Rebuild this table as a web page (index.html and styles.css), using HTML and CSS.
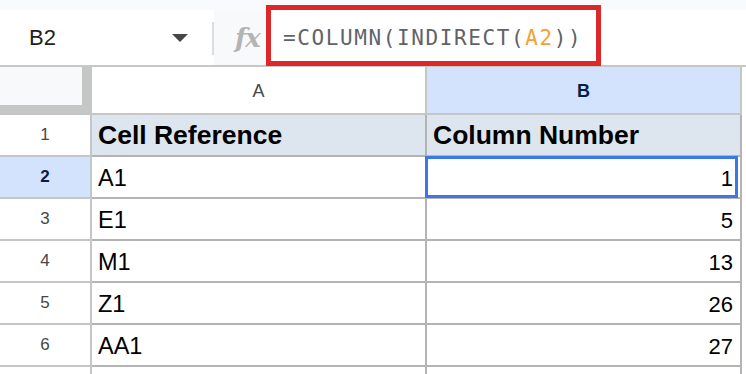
FILE: index.html
```html
<!DOCTYPE html>
<html>
<head>
<meta charset="utf-8">
<link rel="stylesheet" href="styles.css">
</head>
<body>
<div class="app">
  <div class="fbar">
    <div class="namebox">
      <span class="ref">B2</span>
      <span class="caret"></span>
    </div>
    <div class="divider"></div>
    <div class="fx">fx</div>
    <div class="formula">
      <span class="ftext">=COLUMN(INDIRECT(<span class="arg">A2</span>))</span>
      <div class="callout"></div>
    </div>
  </div>
  <div class="grid">
    <div class="corner"><div class="corner-fill"></div></div>
    <div class="colhdr">A</div>
    <div class="colhdr sel">B</div>
    <div class="edge"></div>

    <div class="rowhdr">1</div>
    <div class="cell head">Cell Reference</div>
    <div class="cell head">Column Number</div>
    <div class="edge"></div>

    <div class="rowhdr sel">2</div>
    <div class="cell">A1</div>
    <div class="cell num active">1</div>
    <div class="edge"></div>

    <div class="rowhdr">3</div>
    <div class="cell">E1</div>
    <div class="cell num">5</div>
    <div class="edge"></div>

    <div class="rowhdr">4</div>
    <div class="cell">M1</div>
    <div class="cell num">13</div>
    <div class="edge"></div>

    <div class="rowhdr">5</div>
    <div class="cell">Z1</div>
    <div class="cell num">26</div>
    <div class="edge"></div>

    <div class="rowhdr">6</div>
    <div class="cell">AA1</div>
    <div class="cell num">27</div>
    <div class="edge"></div>

    <div class="rowhdr"></div>
    <div class="cell"></div>
    <div class="cell"></div>
    <div class="edge"></div>
  </div>
</div>
</body>
</html>
```
FILE: styles.css
```css
* { box-sizing: border-box; }
html, body { margin: 0; padding: 0; background: #ffffff; }
body { font-family: "Liberation Sans", Arial, sans-serif; overflow: hidden; }

.app { width: 746px; height: 374px; overflow: hidden; background: #f8fafd; padding-top: 10px; }

.fbar {
  display: flex;
  height: 57px;
  border-bottom: 2px solid #c7c7c7;
  background: #ffffff;
}
.namebox {
  width: 212px;
  display: flex;
  align-items: center;
  justify-content: space-between;
  padding: 0 24px 0 29px;
  background: #ffffff;
}
.ref { font-size: 22px; color: #1f1f1f; }
.caret {
  width: 0; height: 0;
  border-left: 8px solid transparent;
  border-right: 8px solid transparent;
  border-top: 8px solid #444746;
}
.divider { width: 2px; height: 33px; margin-top: 12px; background: #dadce0; }
.fx {
  width: 52px;
  background: #f8f9fa;
  padding-left: 21px;
  display: flex;
  align-items: center;
  font-family: "DejaVu Serif", serif;
  font-style: italic;
  font-weight: bold;
  font-size: 26px;
  color: #b4b4b4;
  letter-spacing: -1px;
}
.formula {
  flex: 1;
  position: relative;
  display: flex;
  align-items: center;
  padding-left: 17px;
  background: #ffffff;
}
.ftext {
  font-family: "DejaVu Sans Mono", monospace;
  font-size: 21px;
  letter-spacing: 1.6px;
  color: #5f6368;
}
.arg { color: #f4a235; }
.callout {
  position: absolute;
  left: 0; top: -5px;
  width: 335px; height: 61px;
  border: 5px solid #dc2828;
}

.grid {
  display: grid;
  grid-template-columns: 92px 335px 315px 4px;
  grid-template-rows: 48px repeat(6, 42px) 42px;
  background: #ffffff;
}
.corner {
  background: #c4c7c5;
  border-right: 1px solid #c4c7c5;
}
.corner-fill { width: 82px; height: 38px; background: #f8f9fa; }

.colhdr {
  display: flex;
  align-items: center;
  justify-content: center;
  padding-top: 2px;
  font-size: 18px;
  color: #444746;
  background: #ffffff;
  border-right: 2px solid #c4c7c5;
  border-bottom: 2px solid #c4c7c5;
}
.colhdr.sel { background: #d3e3fd; color: #041e49; font-weight: bold; }

.rowhdr {
  display: flex;
  align-items: center;
  justify-content: center;
  font-size: 17px;
  color: #444746;
  background: #ffffff;
  border-right: 2px solid #c4c7c5;
  border-bottom: 2px solid #c4c7c5;
}
.rowhdr.sel { background: #d3e3fd; color: #041e49; font-weight: bold; }

.cell {
  position: relative;
  display: flex;
  align-items: flex-end;
  padding: 0 8px 5px 6px;
  font-size: 23.5px;
  color: #000000;
  background: #ffffff;
  border-right: 2px solid #b4b4b4;
  border-bottom: 2px solid #b4b4b4;
  white-space: nowrap;
}
.cell.head { background: #dde5ef; font-weight: bold; font-size: 26.5px; padding-bottom: 4px; }
.cell.num { justify-content: flex-end; font-size: 22px; padding-right: 7px; }
.cell.active::after {
  content: "";
  position: absolute;
  left: -2px; top: -1px; right: 2px; bottom: -1px;
  border: 3px solid #3b78e7;
}
.edge { background: #ffffff; }
```
